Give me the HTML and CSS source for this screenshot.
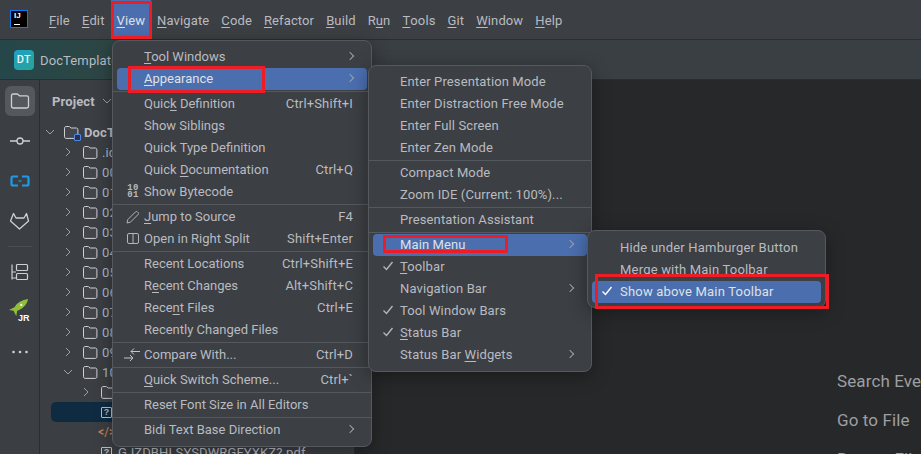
FILE: index.html
```html
<!DOCTYPE html>
<html lang="en">
<head>
<meta charset="utf-8">
<title>DocTemplate</title>
<link rel="stylesheet" href="styles.css">
</head>
<body>
<svg class="defs" width="0" height="0">
  <symbol id="folder" viewBox="0 0 16 16"><path d="M1.500 4.200c0-.9.700-1.700 1.600-1.700h2.800c.4 0 .7.100 1 .4l1.300 1.100h5.100c.9 0 1.600.7 1.600 1.600v7.200c0 .9-.7 1.600-1.600 1.600H3.100c-.9 0-1.600-.7-1.600-1.600z" fill="#43454a" stroke="#ced0d6" stroke-width="1"/></symbol>
  <symbol id="right" viewBox="0 0 10 10"><path d="M3 1l4 4-4 4" fill="none" stroke="#9da0a8" stroke-width="1"/></symbol>
  <symbol id="down" viewBox="0 0 10 10"><path d="M1 3l4 4 4-4" fill="none" stroke="#9da0a8" stroke-width="1"/></symbol>
  <symbol id="check" viewBox="0 0 12 12"><path d="M1.500 6.500l3 3 6-7.500" fill="none" stroke="currentColor" stroke-width="1.400"/></symbol>
</svg>
<div class="app">
  <header class="menubar">
    <div class="logo"><span class="logo-text">IJ</span><span class="logo-bar"></span></div>
    <nav class="menus">
      <span class="top"><u>F</u>ile</span>
      <span class="top"><u>E</u>dit</span>
      <span class="top active"><u>V</u>iew</span>
      <span class="top"><u>N</u>avigate</span>
      <span class="top"><u>C</u>ode</span>
      <span class="top"><u>R</u>efactor</span>
      <span class="top"><u>B</u>uild</span>
      <span class="top">R<u>u</u>n</span>
      <span class="top"><u>T</u>ools</span>
      <span class="top"><u>G</u>it</span>
      <span class="top"><u>W</u>indow</span>
      <span class="top"><u>H</u>elp</span>
    </nav>
  </header>
  <div class="toolbar">
    <div class="project-badge">DT</div>
    <span class="project-name">DocTemplate</span>
  </div>
  <div class="body">
    <aside class="strip">
      <div class="strip-btn on"><svg width="20" height="20" viewBox="0 0 20 20"><path d="M1.500 4.800c0-1 .8-1.800 1.800-1.800h3.600c.5 0 .9.200 1.200.5l1.400 1.300h7.200c1 0 1.800.8 1.800 1.800v8.600c0 1-.8 1.800-1.800 1.800H3.300c-1 0-1.800-.8-1.800-1.800z" fill="none" stroke="#ced0d6" stroke-width="1.300"/></svg></div>
      <div class="strip-btn"><svg width="20" height="20" viewBox="0 0 20 20"><circle cx="10" cy="10" r="3" fill="none" stroke="#ced0d6" stroke-width="1.300"/><path d="M0 10h7M13 10h7" stroke="#ced0d6" stroke-width="1.300"/></svg></div>
      <div class="strip-btn"><svg width="20" height="20" viewBox="0 0 20 20"><path d="M8 5.500H3c-1 0-1.500.6-1.500 1.500v6c0 .9.500 1.500 1.500 1.500h5M12 5.500h5c1 0 1.500.6 1.500 1.500v6c0 .9-.5 1.500-1.500 1.500h-5" fill="none" stroke="#1e9be8" stroke-width="2.200"/><path d="M8.500 10h3" stroke="#1e9be8" stroke-width="1.200"/></svg></div>
      <div class="strip-btn"><svg width="20" height="20" viewBox="0 0 20 20"><path d="M3.500 2.500l2.500 4.500h8l2.500-4.500 2 7.500-9 8-9-8z" fill="none" stroke="#ced0d6" stroke-width="1.300" stroke-linejoin="round"/></svg></div>
      <div class="strip-sep"></div>
      <div class="strip-btn"><svg width="20" height="20" viewBox="0 0 20 20"><path d="M2 2.500v15M2 10h4M2 16h4" fill="none" stroke="#ced0d6" stroke-width="1.200"/><rect x="6.500" y="2.500" width="11" height="6" rx="1" fill="none" stroke="#ced0d6" stroke-width="1.200"/><rect x="6.500" y="11.500" width="11" height="6" rx="1" fill="none" stroke="#ced0d6" stroke-width="1.200"/></svg></div>
      <div class="strip-btn jr"><svg class="rocket" width="20" height="20" viewBox="0 0 22 22"><path d="M21 0c-7 1-12 4-15 9l-6 3 5 1 3 6 1-6c6-2 11-7 12-13z" fill="#8fbf3a"/><circle cx="13.500" cy="6.500" r="1.300" fill="#e4f2c4"/></svg><span class="jr-text">JR</span></div>
      <div class="strip-btn"><svg width="20" height="20" viewBox="0 0 20 20"><circle cx="3.500" cy="10" r="1.300" fill="#ced0d6"/><circle cx="10" cy="10" r="1.300" fill="#ced0d6"/><circle cx="16.500" cy="10" r="1.300" fill="#ced0d6"/></svg></div>
    </aside>
    <section class="project">
      <div class="project-head"><span class="project-title">Project</span><svg class="head-chev" width="10" height="10"><use href="#down"/></svg></div>
      <div class="tree">
        <div class="row l0"><svg class="chev" width="10" height="10"><use href="#down"/></svg><span class="root-icon"><svg width="16" height="16"><use href="#folder"/></svg><span class="root-mark"></span></span><b class="root-name">DocTemplate</b></div>
        <div class="row l1"><svg class="chev" width="10" height="10"><use href="#right"/></svg><svg width="16" height="16"><use href="#folder"/></svg><span class="fname">.idea</span></div>
        <div class="row l1"><svg class="chev" width="10" height="10"><use href="#right"/></svg><svg width="16" height="16"><use href="#folder"/></svg><span class="fname">00</span></div>
        <div class="row l1"><svg class="chev" width="10" height="10"><use href="#right"/></svg><svg width="16" height="16"><use href="#folder"/></svg><span class="fname">01</span></div>
        <div class="row l1"><svg class="chev" width="10" height="10"><use href="#right"/></svg><svg width="16" height="16"><use href="#folder"/></svg><span class="fname">02</span></div>
        <div class="row l1"><svg class="chev" width="10" height="10"><use href="#right"/></svg><svg width="16" height="16"><use href="#folder"/></svg><span class="fname">03</span></div>
        <div class="row l1"><svg class="chev" width="10" height="10"><use href="#right"/></svg><svg width="16" height="16"><use href="#folder"/></svg><span class="fname">04</span></div>
        <div class="row l1"><svg class="chev" width="10" height="10"><use href="#right"/></svg><svg width="16" height="16"><use href="#folder"/></svg><span class="fname">05</span></div>
        <div class="row l1"><svg class="chev" width="10" height="10"><use href="#right"/></svg><svg width="16" height="16"><use href="#folder"/></svg><span class="fname">06</span></div>
        <div class="row l1"><svg class="chev" width="10" height="10"><use href="#right"/></svg><svg width="16" height="16"><use href="#folder"/></svg><span class="fname">07</span></div>
        <div class="row l1"><svg class="chev" width="10" height="10"><use href="#right"/></svg><svg width="16" height="16"><use href="#folder"/></svg><span class="fname">08</span></div>
        <div class="row l1"><svg class="chev" width="10" height="10"><use href="#right"/></svg><svg width="16" height="16"><use href="#folder"/></svg><span class="fname">09</span></div>
        <div class="row l1"><svg class="chev" width="10" height="10"><use href="#down"/></svg><svg width="16" height="16"><use href="#folder"/></svg><span class="fname">10</span></div>
        <div class="row l2"><svg class="chev" width="10" height="10"><use href="#right"/></svg><svg width="16" height="16"><use href="#folder"/></svg><span class="fname">img</span></div>
        <div class="row l3 selected"><span class="qfile">?</span></div>
        <div class="row l3"><span class="xml">&lt;/&gt;</span></div>
        <div class="row l3"><span class="qfile">?</span><span class="pdf">GJZDBHLSYSDWRGFYXKZ?.pdf</span></div>
      </div>
    </section>
    <main class="editor">
      <div class="hints">
        <p class="hint">Search Everywhere</p>
        <p class="hint">Go to File</p>
        <p class="hint">Recent Files</p>
      </div>
    </main>
  </div>
</div>

<div class="popup view-menu">
  <div class="item"><span class="label"><u>T</u>ool Windows</span><i class="arrow"></i></div>
  <div class="item hi"><span class="label"><u>A</u>ppearance</span><i class="arrow"></i></div>
  <div class="sep"></div>
  <div class="item"><span class="label">Quic<u>k</u> Definition</span><span class="key">Ctrl+Shift+I</span></div>
  <div class="item"><span class="label">Show Siblings</span></div>
  <div class="item"><span class="label">Quick Type Definition</span></div>
  <div class="item"><span class="label">Quick <u>D</u>ocumentation</span><span class="key">Ctrl+Q</span></div>
  <div class="item"><span class="ico bytes">10<br>01</span><span class="label">Show Bytecode</span></div>
  <div class="sep"></div>
  <div class="item"><span class="ico"><svg width="14" height="14" viewBox="0 0 14 14"><path d="M1 13l.8-3.400L9.600 1.800c.5-.5 1.200-.5 1.700 0l.9.9c.5.500.5 1.200 0 1.700L4.400 12.200z" fill="none" stroke="#b4b6bb" stroke-width="1"/></svg></span><span class="label"><u>J</u>ump to Source</span><span class="key">F4</span></div>
  <div class="item"><span class="ico"><svg width="14" height="14" viewBox="0 0 14 14"><rect x="1.500" y="1.500" width="11" height="10" rx="1.500" fill="none" stroke="#b4b6bb"/><path d="M7 1.500v10" stroke="#b4b6bb"/></svg></span><span class="label">Open in Right Split</span><span class="key">Shift+Enter</span></div>
  <div class="sep"></div>
  <div class="item"><span class="label">Recent Locations</span><span class="key">Ctrl+Shift+E</span></div>
  <div class="item"><span class="label">R<u>e</u>cent Changes</span><span class="key">Alt+Shift+C</span></div>
  <div class="item"><span class="label">Rece<u>n</u>t Files</span><span class="key">Ctrl+E</span></div>
  <div class="item"><span class="label">Recently Changed Files</span></div>
  <div class="sep"></div>
  <div class="item"><span class="ico compare"><svg width="18" height="16" viewBox="0 0 18 16"><path d="M8 4.500h9M11 1.500l-3 3 3 3M1 11h9M7 8l3 3-3 3" fill="none" stroke="#c4c6cb" stroke-width="1"/></svg></span><span class="label">Compare With...</span><span class="key">Ctrl+D</span></div>
  <div class="sep"></div>
  <div class="item"><span class="label"><u>Q</u>uick Switch Scheme...</span><span class="key">Ctrl+`</span></div>
  <div class="sep"></div>
  <div class="item"><span class="label">Reset Font Size in All Editors</span></div>
  <div class="sep"></div>
  <div class="item"><span class="label">Bidi Text Base Direction</span><i class="arrow"></i></div>
</div>

<div class="popup appearance-menu">
  <div class="item"><span class="label">Enter Presentation Mode</span></div>
  <div class="item"><span class="label">Enter Distraction Free Mode</span></div>
  <div class="item"><span class="label">Enter Full Screen</span></div>
  <div class="item"><span class="label">Enter Zen Mode</span></div>
  <div class="sep"></div>
  <div class="item"><span class="label">Compact Mode</span></div>
  <div class="item"><span class="label">Zoom IDE (Current: 100%)...</span></div>
  <div class="sep"></div>
  <div class="item"><span class="label">Presentation Assistant</span></div>
  <div class="sep"></div>
  <div class="item hi"><span class="label">Main Menu</span><i class="arrow"></i></div>
  <div class="item"><svg class="tick" width="12" height="12"><use href="#check"/></svg><span class="label"><u>T</u>oolbar</span></div>
  <div class="item"><span class="label">Navigation Bar</span><i class="arrow"></i></div>
  <div class="item"><svg class="tick" width="12" height="12"><use href="#check"/></svg><span class="label">Tool Window Bars</span></div>
  <div class="item"><svg class="tick" width="12" height="12"><use href="#check"/></svg><span class="label"><u>S</u>tatus Bar</span></div>
  <div class="item"><span class="label">Status Bar <u>W</u>idgets</span><i class="arrow"></i></div>
</div>

<div class="popup main-menu-menu">
  <div class="item"><span class="label">Hide under Hamburger Button</span></div>
  <div class="item"><span class="label">Merge with Main Toolbar</span></div>
  <div class="item hi"><svg class="tick" width="12" height="12"><use href="#check"/></svg><span class="label">Show above Main Toolbar</span></div>
</div>

<div class="mark mark-view"></div>
<div class="mark mark-appearance"></div>
<div class="mark mark-main"></div>
<div class="mark mark-show"></div>
</body>
</html>
```

FILE: styles.css
```css
* { box-sizing: border-box; }
html, body { margin: 0; height: 100%; }
body {
  position: relative;
  width: 921px;
  height: 454px;
  overflow: hidden;
  background: #272829;
  color: #b9bbc1;
  font-family: Roboto, "Noto Sans", sans-serif;
  font-size: 13px;
  letter-spacing: 0.12px;
}
.defs { position: absolute; }
u { text-underline-offset: 2px; text-decoration-thickness: 1px; }

.app { display: flex; flex-direction: column; height: 454px; }

.menubar {
  display: flex;
  align-items: stretch;
  height: 40px;
  flex: none;
  background: #3c3f43;
  border-bottom: 1px solid #2b2d30;
}
.logo {
  width: 16px; height: 16px;
  margin: 11px 0 0 11px;
  background: #000;
  outline: 1px solid #0f7bf0;
  position: relative;
  color: #fff;
}
.logo-text {
  position: absolute; left: 3px; top: 0;
  font: bold 8px/9px "Liberation Sans", sans-serif;
  letter-spacing: 0;
}
.logo-bar { position: absolute; left: 3px; bottom: 2px; width: 6px; height: 1px; background: #fff; }
.menus { display: flex; margin-left: 16px; }
.top { display: flex; align-items: center; padding: 2px 6px 0; height: 39px; white-space: pre; }
.top.active { background: #4b6eaf; color: #dfe1e5; }

.toolbar {
  display: flex;
  align-items: center;
  height: 40px;
  flex: none;
  padding: 2px 0 0 14px;
  background: linear-gradient(90deg, #25474a 0, #2c4645 90px, #3a3f43 300px);
  border-bottom: 1px solid #2b2d30;
}
.project-badge {
  width: 20px; height: 20px;
  margin-top: -2px;
  border-radius: 4px;
  background: linear-gradient(135deg, #1f9fc4, #27a59a);
  color: #e8f6f6;
  font-size: 11px;
  font-weight: 500;
  display: flex; align-items: center; justify-content: center;
  letter-spacing: 0.5px;
}
.project-name { margin-left: 6px; }

.body { flex: 1; display: flex; min-height: 0; }
.strip {
  width: 40px;
  flex: none;
  background: #3b3e42;
  border-right: 1px solid #2b2d30;
  display: flex;
  flex-direction: column;
  align-items: center;
  padding-top: 6px;
}
.strip-btn {
  width: 30px; height: 30px;
  margin-bottom: 10px;
  display: flex; align-items: center; justify-content: center;
  border-radius: 6px;
  position: relative;
}
.strip-btn.on { background: #55585d; }
.strip-sep { width: 24px; height: 1px; background: #4a4d51; margin: 0 0 10px; }
.rocket { margin: -6px 0 0 -1px; }
.jr-text {
  position: absolute; right: 5px; bottom: 4px;
  color: #fff; font: bold 9px/10px "Liberation Sans", sans-serif; letter-spacing: 0;
}

.project {
  width: 315px;
  flex: none;
  background: #3b3e42;
  border-right: 1px solid #2b2d30;
  overflow: hidden;
}
.project-head { display: flex; align-items: center; height: 42px; padding: 0 0 0 12px; }
.project-title { font-weight: 700; }
.head-chev { margin-left: 7px; }
.tree { display: flex; flex-direction: column; }
.row { display: flex; align-items: center; height: 20px; white-space: nowrap; flex: none; }
.l0 { padding-left: 5px; }
.l1 { padding-left: 23px; }
.l2 { padding-left: 41px; }
.l3 { padding-left: 61px; }
.chev { margin-right: 9px; flex: none; }
.l0 .chev { margin-right: 8px; }
.root-icon { position: relative; display: flex; }
.root-mark {
  position: absolute; right: -2px; bottom: -1px;
  width: 7px; height: 7px;
  border: 1px solid #4f86e8;
  background: #2a3345;
  border-radius: 1px;
}
.root-name { margin-left: 5px; }
.fname { margin-left: 4px; color: #a9b7c6; }
.selected { background: #0f2b42; margin-left: 11px; padding-left: 50px; border-radius: 5px 0 0 5px; }
.qfile {
  width: 11px; height: 11px;
  border: 1px solid #bcbec4;
  border-radius: 1px;
  font: bold 9px/9px "Liberation Sans", sans-serif;
  text-align: center;
  letter-spacing: 0;
}
.xml { color: #c77d55; margin-left: -3px; font-size: 12px; font-weight: 500; }
.pdf { margin-left: 6px; }

.editor { flex: 1; padding: 290px 0 0 482px; overflow: hidden; }
.hints { display: flex; flex-direction: column; gap: 17px; }
.hint { margin: 0; font-size: 17px; line-height: 22px; color: #9d9fa3; white-space: nowrap; }

.popup {
  position: absolute;
  background: #3c3f43;
  border: 1px solid #55585d;
  border-radius: 8px;
  padding: 5px 0;
  box-shadow: 0 4px 18px rgba(0, 0, 0, .35);
}
.view-menu { left: 112px; top: 40px; width: 260px; letter-spacing: 0; }
.appearance-menu { left: 368px; top: 65px; width: 224px; }
.main-menu-menu { left: 587px; top: 230px; width: 239px; padding-top: 6px; padding-bottom: 4px; letter-spacing: 0.2px; }

.item {
  position: relative;
  display: flex;
  align-items: center;
  height: 22px;
  margin: 0 4px;
  padding: 0 13px 2px 27px;
  border-radius: 4px;
  white-space: nowrap;
}
.main-menu-menu .item { padding-left: 28px; }
.item.hi { background: #4b6eaf; color: #dfe1e5; }
.label { flex: 1; }
.key { margin: 0 1px 0 12px; letter-spacing: 0.15px; }
.sep { height: 3px; display: flex; align-items: center; margin: 0; }
.sep::before { content: ""; flex: 1; height: 1px; background: #55585d; }
.arrow {
  width: 6px; height: 6px;
  border-top: 1px solid #9da0a8;
  border-right: 1px solid #9da0a8;
  transform: rotate(45deg);
  margin-right: 1px;
}
.ico {
  position: absolute;
  left: 9px; top: 4px;
  width: 14px; height: 14px;
  display: flex; align-items: center; justify-content: center;
}
.bytes {
  display: block;
  font: bold 9px/7px "Liberation Mono", monospace;
  letter-spacing: 0.4px;
  text-align: center;
}
.compare { left: 6px; top: 3px; width: 18px; height: 16px; }
.tick { position: absolute; left: 9px; top: 4px; color: #b4b6bb; }
.hi .tick { color: #fff; }

.mark { position: absolute; border: 3px solid #ee1c25; pointer-events: none; }
.mark-view { left: 111px; top: 1px; width: 41px; height: 38px; }
.mark-appearance { left: 128px; top: 66px; width: 137px; height: 27px; }
.mark-main { left: 383px; top: 235px; width: 125px; height: 18px; }
.mark-show { left: 595px; top: 274px; width: 234px; height: 35px; }
```
